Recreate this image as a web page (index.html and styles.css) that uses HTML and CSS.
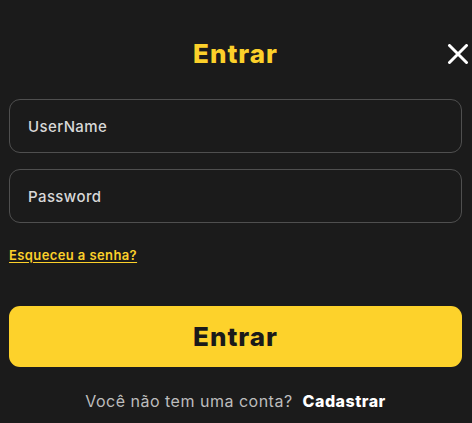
FILE: index.html
```html
<!DOCTYPE html>
<html lang="pt">
<head>
<meta charset="utf-8">
<link rel="stylesheet" href="styles.css">
</head>
<body>
<div class="modal">
  <div class="header">
    <span></span>
    <h1 class="title">Entrar</h1>
    <button class="close" aria-label="Fechar">
      <svg width="22" height="20" viewBox="0 0 22 20"><path d="M2.5 1.5 L19.5 18.5 M19.5 1.5 L2.5 18.5" stroke="#fff" stroke-width="3" stroke-linecap="round"/></svg>
    </button>
  </div>
  <div class="fields">
    <div class="field"><input type="text" placeholder="UserName"></div>
    <div class="field"><input type="password" placeholder="Password"></div>
  </div>
  <a class="forgot" href="#">Esqueceu a senha?</a>
  <button class="submit">Entrar</button>
  <p class="signup">Você não tem uma conta? <a href="#">Cadastrar</a></p>
</div>
</body>
</html>
```
FILE: styles.css
```css
* { box-sizing: border-box; }
html, body { margin: 0; padding: 0; background: #1b1b1b; }
body { font-family: Inter, "Noto Sans", sans-serif; }
.modal { padding: 0 10px 0 9px; display: flex; flex-direction: column; }
.header {
  display: grid;
  grid-template-columns: 1fr auto 1fr;
  align-items: center;
  height: 99px;
  padding-top: 8px;
}
.title {
  margin: 0;
  color: #fcd02a;
  font-size: 26px;
  font-weight: 800;
  letter-spacing: 1px;
}
.close {
  justify-self: end;
  background: none;
  border: 0;
  padding: 0;
  margin-right: -7px;
  display: flex;
}
.fields { display: flex; flex-direction: column; gap: 16px; }
.field input {
  width: 100%;
  height: 54px;
  background: #1b1b1b;
  border: 1.5px solid #4f4f4f;
  border-radius: 11px;
  padding: 0 18px;
  font-family: inherit;
  font-size: 15px;
  letter-spacing: 0.4px;
  color: #ddd;
  outline: none;
}
.field input::placeholder { color: #d8d8d8; font-weight: 500; }
.forgot {
  margin-top: 24px;
  align-self: flex-start;
  color: #fcd02a;
  font-size: 13px;
  font-weight: 600;
  letter-spacing: 0.4px;
  text-decoration: underline;
  text-underline-offset: 2px;
}
.submit {
  margin-top: 43px;
  height: 61px;
  width: 100%;
  background: #fdd22b;
  border: 0;
  border-radius: 11px;
  font-family: inherit;
  font-size: 26px;
  font-weight: 800;
  letter-spacing: 1px;
  color: #1a1a1a;
}
.signup {
  margin: 24px 0 0;
  text-align: center;
  color: #bdbdbd;
  font-size: 16px;
  letter-spacing: 0.5px;
}
.signup a {
  color: #fff;
  font-weight: 800;
  text-decoration: none;
  margin-left: 5px;
}
```
